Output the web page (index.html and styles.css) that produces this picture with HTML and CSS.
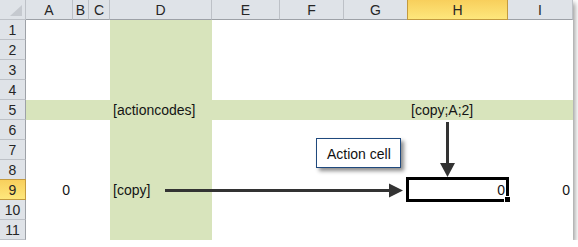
FILE: index.html
```html
<!DOCTYPE html>
<html>
<head>
<meta charset="utf-8">
<title>actioncodes</title>
<link rel="stylesheet" href="styles.css">
</head>
<body>
<div class="sheet">
  <!-- column headers -->
  <div class="hd corner"><span class="tri"></span></div>
  <div class="hd col">A</div>
  <div class="hd col">B</div>
  <div class="hd col">C</div>
  <div class="hd col">D</div>
  <div class="hd col">E</div>
  <div class="hd col">F</div>
  <div class="hd col">G</div>
  <div class="hd col on">H</div>
  <div class="hd col">I</div>

  <!-- row 1 -->
  <div class="hd row">1</div>
  <div class="c"></div><div class="c"></div><div class="c"></div><div class="c g"></div>
  <div class="c"></div><div class="c"></div><div class="c"></div><div class="c"></div><div class="c"></div>
  <!-- row 2 -->
  <div class="hd row">2</div>
  <div class="c"></div><div class="c"></div><div class="c"></div><div class="c g"></div>
  <div class="c"></div><div class="c"></div><div class="c"></div><div class="c"></div><div class="c"></div>
  <!-- row 3 -->
  <div class="hd row">3</div>
  <div class="c"></div><div class="c"></div><div class="c"></div><div class="c g"></div>
  <div class="c"></div><div class="c"></div><div class="c"></div><div class="c"></div><div class="c"></div>
  <!-- row 4 -->
  <div class="hd row">4</div>
  <div class="c"></div><div class="c"></div><div class="c"></div><div class="c g"></div>
  <div class="c"></div><div class="c"></div><div class="c"></div><div class="c"></div><div class="c"></div>
  <!-- row 5: action code header row -->
  <div class="hd row">5</div>
  <div class="c g"></div><div class="c g"></div><div class="c g"></div><div class="c g">[actioncodes]</div>
  <div class="c g"></div><div class="c g"></div><div class="c g"></div><div class="c g">[copy;A;2]</div><div class="c g"></div>
  <!-- row 6 -->
  <div class="hd row">6</div>
  <div class="c"></div><div class="c"></div><div class="c"></div><div class="c g"></div>
  <div class="c"></div><div class="c"></div><div class="c"></div><div class="c"></div><div class="c"></div>
  <!-- row 7 -->
  <div class="hd row">7</div>
  <div class="c"></div><div class="c"></div><div class="c"></div><div class="c g"></div>
  <div class="c"></div><div class="c"></div><div class="c"></div><div class="c"></div><div class="c"></div>
  <!-- row 8 -->
  <div class="hd row">8</div>
  <div class="c"></div><div class="c"></div><div class="c"></div><div class="c g"></div>
  <div class="c"></div><div class="c"></div><div class="c"></div><div class="c"></div><div class="c"></div>
  <!-- row 9: data row with the active cell -->
  <div class="hd row on">9</div>
  <div class="c num">0</div><div class="c"></div><div class="c"></div><div class="c g">[copy]</div>
  <div class="c"></div><div class="c"></div><div class="c"></div>
  <div class="c num active">0<span class="handle"></span></div>
  <div class="c num">0</div>
  <!-- row 10 -->
  <div class="hd row">10</div>
  <div class="c"></div><div class="c"></div><div class="c"></div><div class="c g"></div>
  <div class="c"></div><div class="c"></div><div class="c"></div><div class="c"></div><div class="c"></div>
  <!-- row 11 -->
  <div class="hd row">11</div>
  <div class="c"></div><div class="c"></div><div class="c"></div><div class="c g"></div>
  <div class="c"></div><div class="c"></div><div class="c"></div><div class="c"></div><div class="c"></div>

  <!-- arrows drawn over the grid -->
  <svg class="arrows" width="573" height="240" viewBox="0 0 573 240">
    <line x1="165" y1="190.5" x2="392" y2="190.5" stroke="#333" stroke-width="3"/>
    <polygon points="389,183.5 403,190.5 389,197.5" fill="#333"/>
    <line x1="447.5" y1="122" x2="447.5" y2="165" stroke="#333" stroke-width="3"/>
    <polygon points="440,163 455,163 447.5,177" fill="#333"/>
  </svg>

  <div class="callout">Action cell</div>
</div>
</body>
</html>
```

FILE: styles.css
```css
body {
  margin: 0;
  background: #ffffff;
}

.sheet {
  position: relative;
  display: grid;
  grid-template-columns: 26px 47px 16px 21px 102px 68px 64px 64px 100px 65px;
  grid-template-rows: repeat(12, 20px);
  width: 573px;
  background: #ffffff;
  font-family: "Liberation Sans", Arial, sans-serif;
  font-size: 14px;
  color: #141414;
  box-shadow: 2px 3px 5px rgba(0, 0, 0, 0.4);
}

/* headers */
.hd {
  box-sizing: border-box;
  background: #dfe3e8;
  border-right: 1px solid #bdc1c7;
  border-bottom: 1px solid #bdc1c7;
  text-align: center;
  line-height: 19px;
  padding-top: 1px;
  color: #262626;
}

.hd.col {
  border-bottom-color: #9da1a7;
}

.hd.row {
  border-right-color: #9da1a7;
}

.hd.on {
  background: linear-gradient(#f8cf5c, #fee77c);
  border-color: #c39a3f;
}

.hd.col.on {
  box-shadow: -1px 0 0 #c39a3f;
}

.hd.row.on {
  box-shadow: 0 -1px 0 #c39a3f;
}

.corner {
  display: flex;
  justify-content: flex-end;
  align-items: flex-end;
  padding: 0 3px 3px 0;
}

.tri {
  width: 0;
  height: 0;
  border-left: 12px solid transparent;
  border-bottom: 11px solid #c5c9cf;
}

/* cells */
.c {
  box-sizing: border-box;
  padding: 1px 3px 0;
  line-height: 19px;
  white-space: nowrap;
}

.c.g {
  background: #d8e4bc;
}

.c.num {
  text-align: right;
}

.c.active {
  position: relative;
}

.c.active::after {
  content: "";
  position: absolute;
  left: -2px;
  top: -3px;
  right: -1px;
  bottom: -2px;
  border: 3px solid #000;
}

.handle {
  position: absolute;
  right: -3px;
  bottom: -3px;
  width: 5px;
  height: 5px;
  background: #000;
  border: 1px solid #fff;
  z-index: 1;
}

/* overlays */
.arrows {
  position: absolute;
  left: 0;
  top: 0;
}

.callout {
  position: absolute;
  left: 316px;
  top: 138px;
  box-sizing: border-box;
  width: 85px;
  height: 30px;
  padding: 7px 0 0 10px;
  background: #ffffff;
  border: 1px solid #1f497d;
  font-size: 14px;
  line-height: 16px;
  color: #111;
  box-shadow: 3px 3px 4px rgba(0, 0, 0, 0.45);
}
```
